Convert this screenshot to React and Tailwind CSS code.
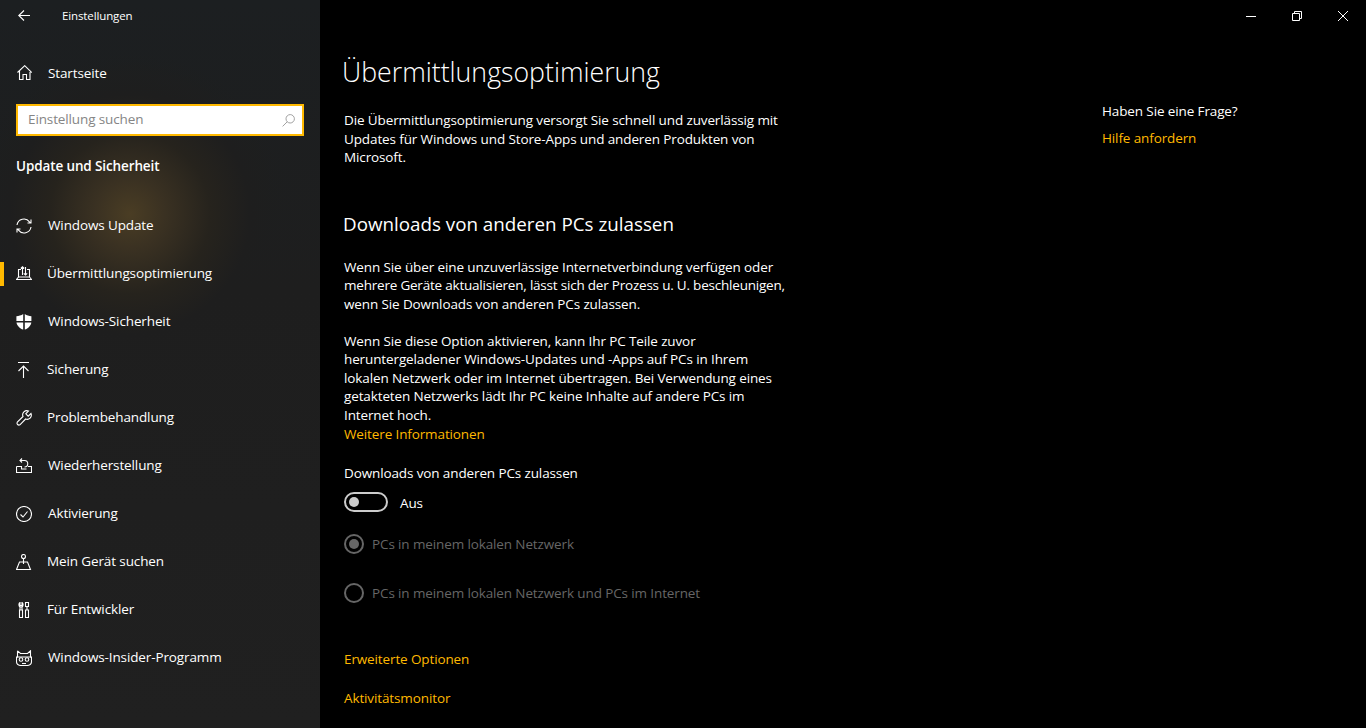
const Ico = ({ children }) => (
  <svg width="16" height="16" viewBox="0 0 16 16" fill="none" stroke="#fff" strokeWidth="1.1" className="shrink-0">
    {children}
  </svg>
);

const navItems = [
  {
    label: 'Windows Update',
    icon: (
      <Ico>
        <path d="M1 7A7 7 0 0 1 13.5 3.8L14.6 5M15 1.5V5H11.5" />
        <path d="M15 9A7 7 0 0 1 2.5 12.2L1.4 11M1 14.5V11H4.5" />
      </Ico>
    ),
  },
  {
    label: 'Übermittlungsoptimierung',
    active: true,
    nudge: true,
    icon: (
      <Ico>
        <path d="M2.5 11V3.5H5M11 3.5H13.5V11M2.5 11L.5 13.5H15.5L13.5 11H2.5" />
        <path d="M6.5 9V.8M4.8 2.5L6.5 .8L8.2 2.5M9.5 1V9M7.8 7.3L9.5 9L11.2 7.3" />
      </Ico>
    ),
  },
  {
    label: 'Windows-Sicherheit',
    icon: (
      <svg width="16" height="16" viewBox="0 0 16 16" fill="#fff" className="shrink-0">
        <path d="M7.2 0C5.4 1.4 2.6 2.2 .4 2.2V7H7.2ZM8.8 0V7H15.4V2.2C13.2 2.2 10.6 1.4 8.8 0ZM.5 8.4C.9 11.5 3.8 14.4 7.2 15.6V8.4ZM8.8 8.4V15.6C12.2 14.4 15 11.5 15.3 8.4Z" />
      </svg>
    ),
  },
  {
    label: 'Sicherung',
    nudge: true,
    icon: (
      <Ico>
        <path d="M2 .5H13M7.5 16V4.5M2.5 9L7.5 4L12.5 9" />
      </Ico>
    ),
  },
  {
    label: 'Problembehandlung',
    nudge: true,
    icon: (
      <Ico>
        <path d="M15 3.5L12.2 6.2L9.8 3.8L12.5 1A4.2 4.2 0 0 0 7 6.5L1.3 12.2A1.9 1.9 0 0 0 3.9 14.8L9.6 9A4.2 4.2 0 0 0 15 3.5Z" />
      </Ico>
    ),
  },
  {
    label: 'Wiederherstellung',
    icon: (
      <Ico>
        <path d="M.5 8.5V14.5H15.5V8.5H12M.5 8.5H5.5V11H10.5" />
        <path d="M6 .5L4 2.5L6 4.5M4.2 2.5H8.5A3.2 3.2 0 0 1 8.5 9" />
      </Ico>
    ),
  },
  {
    label: 'Aktivierung',
    icon: (
      <Ico>
        <circle cx="8" cy="8" r="7.5" />
        <path d="M4.5 8.5L7 11L11.5 5.5" />
      </Ico>
    ),
  },
  {
    label: 'Mein Gerät suchen',
    nudge: true,
    icon: (
      <Ico>
        <circle cx="7.5" cy="2.5" r="2" />
        <path d="M7.5 4.5V10M3.5 8H11.5L14.5 15.5H.5Z" />
      </Ico>
    ),
  },
  {
    label: 'Für Entwickler',
    nudge: true,
    icon: (
      <Ico>
        <path d="M4 .5V3.5H6V.5A2.5 2.5 0 0 1 7 3C7 4.2 6.4 5 5 5C3.6 5 3 4.2 3 3A2.5 2.5 0 0 1 4 .5ZM4 5V8H6V5M3.5 8H6.5V15.5H3.5Z" />
        <path d="M9.5 .5H12.5V4.5H9.5ZM11 4.5V8M9.5 8H12.5V15.5H9.5Z" />
      </Ico>
    ),
  },
  {
    label: 'Windows-Insider-Programm',
    icon: (
      <Ico>
        <path d="M1.5 .8L4.5 3.5H11.5L14.5 .8V7.5M1.5 .8V7.5" />
        <path d="M.5 7V11.5C.5 14 2.5 15.5 5 15.5H11C13.5 15.5 15.5 14 15.5 11.5V7Z" />
        <circle cx="5" cy="9.5" r="1.8" />
        <circle cx="11" cy="9.5" r="1.8" />
        <path d="M6 13.5H10" />
      </Ico>
    ),
  },
];

const Radio = ({ checked, label }) => (
  <div className="flex items-center gap-2 h-5">
    <div className="w-5 h-5 rounded-full border-2 border-[#666] flex items-center justify-center">
      {checked && <div className="w-2.5 h-2.5 rounded-full bg-[#666]" />}
    </div>
    <span className="text-[#666]">{label}</span>
  </div>
);

const YellowLink = ({ children, className = '' }) => (
  <div className={`text-[#ffb900] ${className}`}>{children}</div>
);

export default function App() {
  return (
    <div className="flex h-screen w-full overflow-hidden bg-black text-white text-[13.5px] tracking-[-0.12px] leading-[18.5px] font-['Open_Sans',sans-serif]">
      <aside className="w-[320px] shrink-0 flex flex-col bg-[radial-gradient(circle_at_130px_214px,#4a3d24_0px,#3a3122_35px,#26231d_80px,#1e1e1e_120px,transparent_160px),linear-gradient(180deg,#1c1f21_0%,#1e1e1e_40%,#202020_100%)]">
        <div className="h-8 flex items-center pl-[18px]">
          <svg width="12" height="12" viewBox="0 0 12 12" fill="none" stroke="#fff" strokeWidth="1.1" className="-mt-px">
            <path d="M6 .5L.8 5.5L6 10.5M1 5.5H12" />
          </svg>
          <span className="ml-[32px] mt-[1px] text-[11.5px]">Einstellungen</span>
        </div>
        <div className="h-[48px] mt-[17px] flex items-center pl-4 gap-4">
          <Ico>
            <path d="M1.5 7.5L8.7 .7L15.8 7.5M3.5 5.8V14.5H7V9.5H10.5V14.5H14V5.8" />
          </Ico>
          <span>Startseite</span>
        </div>
        <div className="mx-4 mt-[7px] h-8 border-2 border-[#ffb900] bg-white flex items-center justify-between pl-2.5 pr-[7px] text-[#858585]">
          <span className="-mt-px">Einstellung suchen</span>
          <svg width="13" height="13" viewBox="0 0 13 13" fill="none" stroke="#a0a0a0" strokeWidth="1">
            <circle cx="8.2" cy="4.8" r="4.2" />
            <path d="M5.2 7.8L.6 12.4" />
          </svg>
        </div>
        <div className="mt-[21px] pl-4 font-semibold">Update und Sicherheit</div>
        <nav className="mt-[26px] flex flex-col">
          {navItems.map((item) => (
            <div key={item.label} className="relative h-[48px] flex items-center pl-4 gap-4">
              {item.active && <div className="absolute left-0 top-3 w-1 h-6 bg-[#ffb900]" />}
              {item.icon}
              <span className={item.nudge ? '-ml-px' : ''}>{item.label}</span>
            </div>
          ))}
        </nav>
      </aside>

      <main className="flex-1 flex flex-col min-w-0">
        <div className="h-8 flex justify-end shrink-0">
          <div className="w-[46px] flex items-center justify-center">
            <div className="w-[10px] h-px bg-white" />
          </div>
          <div className="w-[46px] flex items-center justify-center">
            <svg width="10" height="10" viewBox="0 0 10 10" fill="none" stroke="#fff" strokeWidth="1">
              <path d="M.5 2.5H7.5V9.5H.5ZM2.5 2.5V.5H9.5V7.5H7.5" />
            </svg>
          </div>
          <div className="w-[46px] flex items-center justify-center">
            <svg width="10" height="10" viewBox="0 0 10 10" fill="none" stroke="#fff" strokeWidth="1">
              <path d="M0 0L10 10M10 0L0 10" />
            </svg>
          </div>
        </div>
        <div className="flex flex-1 min-h-0">
          <div className="w-[782px] shrink-0 pl-6">
            <h1 className="mt-[19px] text-[26.7px] leading-[42px] font-light -ml-0.5 tracking-normal">Übermittlungsoptimierung</h1>
            <p className="mt-[18px]">
              Die Übermittlungsoptimierung versorgt Sie schnell und zuverlässig mit
              <br />
              Updates für Windows und Store-Apps und anderen Produkten von
              <br />
              Microsoft.
            </p>
            <h2 className="mt-[43px] text-[18.8px] leading-[28px] -ml-px tracking-normal">Downloads von anderen PCs zulassen</h2>
            <p className="mt-[20px]">
              Wenn Sie über eine unzuverlässige Internetverbindung verfügen oder
              <br />
              <span className="tracking-[-0.21px]">mehrere Geräte aktualisieren, lässt sich der Prozess u. U. beschleunigen,</span>
              <br />
              wenn Sie Downloads von anderen PCs zulassen.
            </p>
            <p className="mt-[18.5px]">
              Wenn Sie diese Option aktivieren, kann Ihr PC Teile zuvor
              <br />
              heruntergeladener Windows-Updates und -Apps auf PCs in Ihrem
              <br />
              lokalen Netzwerk oder im Internet übertragen. Bei Verwendung eines
              <br />
              getakteten Netzwerks lädt Ihr PC keine Inhalte auf andere PCs im
              <br />
              Internet hoch.
            </p>
            <YellowLink className="mt-[0.5px]">Weitere Informationen</YellowLink>
            <div className="mt-[21px]">Downloads von anderen PCs zulassen</div>
            <div className="mt-[9.5px] flex items-center gap-3 h-5">
              <div className="w-11 h-5 rounded-full border-2 border-[#ccc] flex items-center pl-[3px]">
                <div className="w-2.5 h-2.5 rounded-full bg-[#ccc]" />
              </div>
              <span className="pt-[2px]">Aus</span>
            </div>
            <div className="mt-[22px]">
              <Radio checked label="PCs in meinem lokalen Netzwerk" />
            </div>
            <div className="mt-[29px]">
              <Radio label="PCs in meinem lokalen Netzwerk und PCs im Internet" />
            </div>
            <YellowLink className="mt-[46.5px]">Erweiterte Optionen</YellowLink>
            <YellowLink className="mt-[21px]">Aktivitätsmonitor</YellowLink>
          </div>
          <div className="pt-[70px]">
            <div>Haben Sie eine Frage?</div>
            <YellowLink className="mt-[8px]">Hilfe anfordern</YellowLink>
          </div>
        </div>
      </main>
    </div>
  );
}
